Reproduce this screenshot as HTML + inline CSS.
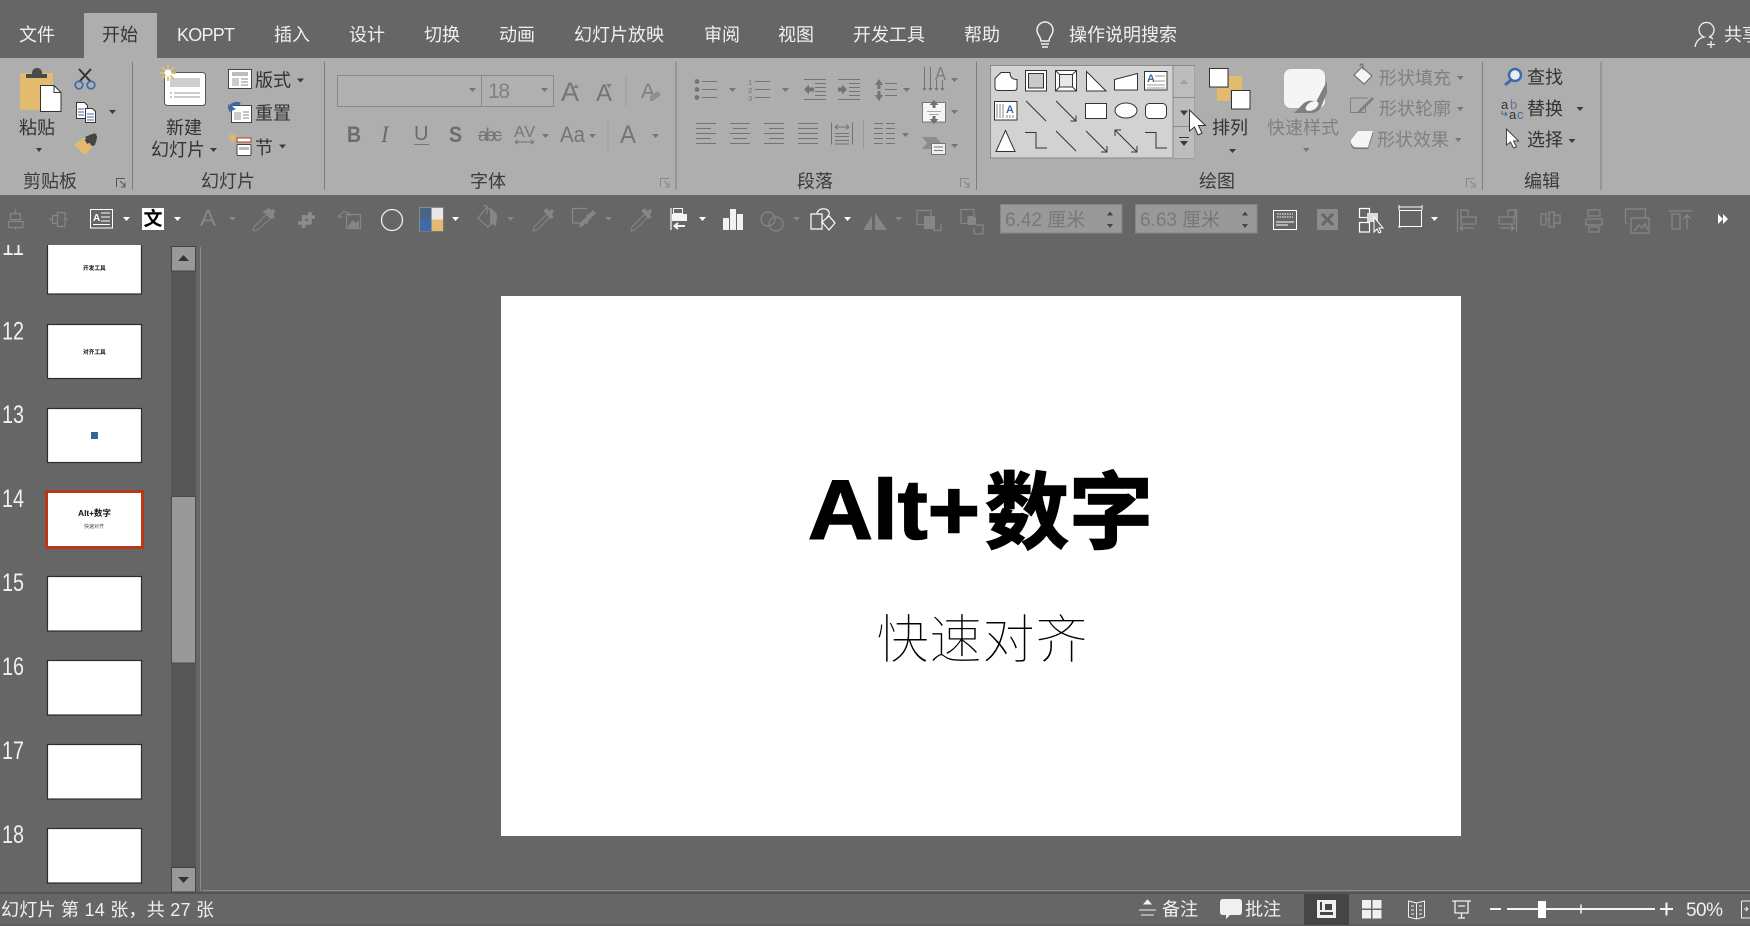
<!DOCTYPE html>
<html lang="zh-CN">
<head>
<meta charset="utf-8">
<title>PowerPoint</title>
<style>
html,body{margin:0;padding:0;background:#666;overflow:hidden}
svg{display:block}
text{font-family:"Liberation Sans","Noto Sans CJK SC",sans-serif}
.tab{font-size:18px;fill:#f0f0f0}
.t{font-size:18px;fill:#333}
.g{font-size:18px;fill:#808080}
.lb{font-size:18px;fill:#3a3a3a;text-anchor:middle}
.n{font-size:25px;fill:#f0f0f0}
.st{font-size:18px;fill:#f0f0f0}
.dim{font-size:19px;fill:#787878}
</style>
</head>
<body>
<svg width="1750" height="926" viewBox="0 0 1750 926" xmlns="http://www.w3.org/2000/svg">
<rect width="1750" height="926" fill="#666"/>

<!-- Ribbon -->
<rect x="0" y="58" width="1750" height="137" fill="#aeaeae"/>
<rect x="84" y="13" width="73" height="45" fill="#aeaeae"/>

<!-- Tabs -->
<text class="tab" x="19" y="41">文件</text>
<text class="t" x="102" y="41">开始</text>
<text class="tab" x="177" y="41" textLength="58">KOPPT</text>
<text class="tab" x="274" y="41">插入</text>
<text class="tab" x="349" y="41">设计</text>
<text class="tab" x="424" y="41">切换</text>
<text class="tab" x="499" y="41">动画</text>
<text class="tab" x="574" y="41">幻灯片放映</text>
<text class="tab" x="704" y="41">审阅</text>
<text class="tab" x="778" y="41">视图</text>
<text class="tab" x="853" y="41">开发工具</text>
<text class="tab" x="964" y="41">帮助</text>
<text class="tab" x="1069" y="41">操作说明搜索</text>
<text class="tab" x="1724" y="41">共享</text>
<path d="M1041 41c0-4-4-6-4-11a8 8 0 0 1 16 0c0 5-4 7-4 11zM1041 44h8M1042 47h6" fill="none" stroke="#f0f0f0" stroke-width="1.5"/>
<path d="M1695 47c1-6 5-9 9-10a7.500 7.500 0 1 1 5 0c1 0 3 1 4 2M1711 41v7M1707 44.500h8" fill="none" stroke="#f0f0f0" stroke-width="1.300"/>

<!-- Group separators -->
<path d="M132.500 62V190M324.500 62V190M676 62V190M976.500 62V190M1482.500 62V190M1601 62V190" stroke="#7e7e7e" stroke-width="1"/>

<!-- Group labels -->
<text class="lb" x="50" y="187.500">剪贴板</text>
<text class="lb" x="228" y="187.500">幻灯片</text>
<text class="lb" x="488" y="187.500">字体</text>
<text class="lb" x="815" y="187.500">段落</text>
<text class="lb" x="1217" y="187.500">绘图</text>
<text class="lb" x="1542" y="187.500">编辑</text>
<path d="M116.500 187V178.500H125M120 181l5 5M125 182.500V187H121" fill="none" stroke="#555"/>
<g fill="none" stroke="#888" stroke-width="1">
<path d="M660.500 187V178.500H669M664 181l5 5M669 182.500V187H665"/>
<path d="M960.500 187V178.500H969M964 181l5 5M969 182.500V187H965"/>
<path d="M1466.500 187V178.500H1475M1470 181l5 5M1475 182.500V187H1471"/>
</g>

<!-- Paste -->
<rect x="20" y="73" width="33" height="37" rx="2" fill="#e3bb6e"/>
<path d="M26 78v-4h6q0-6 5-6t5 6h5v4z" fill="#4a4a4a"/>
<path d="M40.500 85.500H54l7 7v19H40.500z" fill="#fff" stroke="#333" stroke-width="1"/>
<path d="M54 85.500v7h7" fill="none" stroke="#333"/>
<text class="t" x="19" y="134">粘贴</text>
<path d="M79 69l12 13M91 69L79 82" stroke="#333" stroke-width="2" fill="none"/>
<circle cx="79" cy="85" r="3.800" fill="none" stroke="#3e6aa5" stroke-width="1.700"/>
<circle cx="91" cy="85" r="3.800" fill="none" stroke="#3e6aa5" stroke-width="1.700"/>
<path d="M76.500 102.500h8l3 3v13h-11z" fill="#fff" stroke="#333"/>
<path d="M85.500 108.500h7l3 3v11h-10z" fill="#fff" stroke="#333"/>
<path d="M78 109h6M78 112h6M78 115h6M87 114h7M87 117h7M87 120h7" stroke="#3e6aa5" stroke-width="1"/>
<!-- brush -->
<path d="M74 145l10-7 8 9-7 8z" fill="#e3bb6e"/>
<path d="M85 137l7-3 5-0 -2 2 2 2-2 7-3 1z" fill="#444"/>
<path d="M96 135l-10 7" stroke="#444" stroke-width="5"/>

<!-- New slide -->
<rect x="164.500" y="72.500" width="41" height="33" rx="3" fill="#fff" stroke="#555"/>
<rect x="170" y="78" width="30" height="9" fill="#cfcfcf"/>
<path d="M170 93h2M174 93h26M170 97h2M174 97h26" stroke="#999"/>
<path d="M168 65v16M160 73h16M162 67l12 12M174 67l-12 12" stroke="#e3bb6e" stroke-width="1.800"/>
<circle cx="168" cy="73" r="3.500" fill="#fff"/>
<text class="t" x="166" y="134">新建</text>
<text class="t" x="151" y="156">幻灯片</text>
<rect x="228.500" y="69.500" width="23" height="19" fill="#fff" stroke="#444"/>
<rect x="232" y="72" width="16" height="4" fill="#bbb"/>
<rect x="232" y="78" width="7" height="8" fill="#ccc"/>
<path d="M241 79h7M241 82h7M241 85h7" stroke="#888"/>
<text class="t" x="255" y="86.500">版式</text>
<rect x="231.500" y="105.500" width="20" height="17" fill="#fff" stroke="#444"/>
<rect x="234" y="112" width="7" height="8" fill="#ccc"/>
<path d="M243 112h6M243 115h6M243 118h6" stroke="#888"/>
<path d="M229 109c2-5 7-7 11-5" fill="none" stroke="#3e6aa5" stroke-width="3"/>
<path d="M228 104l1 8 7-3z" fill="#3e6aa5"/>
<text class="t" x="255" y="119.500">重置</text>
<path d="M233 133v10M228 138h10M229.500 134.500l7 7M236.500 134.500l-7 7" stroke="#e3bb6e" stroke-width="1.200"/>
<rect x="237" y="138" width="14" height="4" fill="#fff" stroke="#b9381a"/>
<rect x="237" y="144.500" width="14" height="11" rx="1" fill="#fff" stroke="#444"/>
<rect x="239" y="147" width="10" height="3" fill="#bbb"/>
<text class="t" x="255" y="154">节</text>

<path d="M36 148h6l-3 4zM109 110h7l-3.500 4zM210 148h7l-3.500 4zM297 78.500h7l-3.500 4zM279 144.500h7l-3.500 4zM1229 149h7l-3.500 4zM1576.500 107h7l-3.500 4zM1568.500 139h7l-3.500 4z" fill="#3a3a3a"/>

<!-- Font group -->
<rect x="337.500" y="75.500" width="144" height="31" fill="#b0b0b0" stroke="#8a8a8a"/>
<rect x="481.500" y="75.500" width="72" height="31" fill="#b0b0b0" stroke="#8a8a8a"/>
<text x="488" y="98" style="font-size:21px;fill:#808080" textLength="22">18</text>
<text x="561" y="101" style="font-size:27px;fill:#757575">A</text>
<text x="596" y="101" style="font-size:24px;fill:#757575">A</text>
<text x="641" y="98" style="font-size:21px;fill:#808080">A</text>
<text x="347" y="142" style="font-size:22px;fill:#6c6c6c;font-weight:700" textLength="14" lengthAdjust="spacingAndGlyphs">B</text>
<text x="381" y="142" style="font-size:23px;fill:#6c6c6c;font-style:italic;font-family:'Liberation Serif',serif">I</text>
<text x="414" y="140" style="font-size:20px;fill:#6c6c6c">U</text>
<text x="449" y="142" style="font-size:22px;fill:#6c6c6c;font-weight:700" textLength="13" lengthAdjust="spacingAndGlyphs">S</text>
<text x="478" y="141" style="font-size:18px;fill:#757575" textLength="24">abc</text>
<text x="514" y="137" style="font-size:16px;fill:#757575" textLength="21">AV</text>
<text x="560" y="142" style="font-size:22px;fill:#757575" textLength="25" lengthAdjust="spacingAndGlyphs">Aa</text>
<text x="620" y="143" style="font-size:25px;fill:#757575" textLength="16" lengthAdjust="spacingAndGlyphs">A</text>
<path d="M414 144.500h15M478 135.500h24M515 142h19M515 142l3-2M515 142l3 2M534 142l-3-2M534 142l-3 2" stroke="#757575" fill="none"/>
<path d="M626 76V106M608 121V150" stroke="#9a9a9a"/>
<path d="M650 96l8-5 3 4-8 6h-3z" fill="#909090"/>
<path d="M576 84l3 4h-6zM609 88l3-4h-6z" fill="#808080"/>

<path d="M469 88h7l-3.500 4zM541 88h7l-3.500 4zM542 134h7l-3.500 4zM589 134h7l-3.500 4zM652 134h7l-3.500 4zM729 88h7l-3.500 4zM782 88h7l-3.500 4zM903 88h7l-3.500 4zM951 78h7l-3.500 4zM902 133h7l-3.500 4zM951 110h7l-3.500 4zM951 144h7l-3.500 4zM1303 148h6.500l-3.200 4zM1457 76h6.500l-3.200 4zM1457 107h6.500l-3.200 4zM1455 138h6.500l-3.200 4z" fill="#757575"/>

<!-- Paragraph -->
<g stroke="#737373" stroke-width="1" fill="none">
<path d="M702 81.500h15M702 89.500h15M702 97.500h15"/>
<path d="M755 81.500h15M755 89.500h15M755 97.500h15"/>
<path d="M804 79.500h22M815 83.500h11M815 87.500h11M815 91.500h11M815 95.500h11M804 99.500h22"/>
<path d="M838 79.500h22M849 83.500h11M849 87.500h11M849 91.500h11M849 95.500h11M838 99.500h22"/>
<path d="M885 83.500h12M885 89.500h12M885 95.500h12"/>
<path d="M924.500 67v23M930.500 67v23M936.500 80v10M942.500 80v10"/>
<path d="M696 123.500h20M696 128.500h15M696 133.500h20M696 138.500h15M696 143.500h20"/>
<path d="M730 123.500h20M733 128.500h14M730 133.500h20M733 138.500h14M730 143.500h20"/>
<path d="M764 123.500h20M769 128.500h15M764 133.500h20M769 138.500h15M764 143.500h20"/>
<path d="M798 123.500h20M798 128.500h20M798 133.500h20M798 138.500h20M798 143.500h20"/>
<path d="M831.500 122.500v22M852.500 122.500v22M835 133.500h14M835 136.500h14M835 140.500h14M835 144h14M835 127h14M835 127l3-2.500M835 127l3 2.500M849 127l-3-2.500M849 127l-3 2.500"/>
<path d="M874 123.500h9M886 123.500h9M874 128.500h9M886 128.500h9M874 133.500h9M886 133.500h9M874 138.500h9M886 138.500h9M874 143.500h9M886 143.500h9"/>
<path d="M863.500 120V148.500" stroke="#9a9a9a"/>
</g>
<g fill="#737373">
<circle cx="697" cy="81.500" r="2.400"/><circle cx="697" cy="89.500" r="2.400"/><circle cx="697" cy="97.500" r="2.400"/>
<text x="748" y="85" style="font-size:7.500px;fill:#737373">1</text><text x="748" y="93" style="font-size:7.500px;fill:#737373">2</text><text x="748" y="101" style="font-size:7.500px;fill:#737373">3</text>
<path d="M804 89.500l5-5v3h5v4h-5v3zM847 89.500l-5-5v3h-4v4h4v3z"/>
<path d="M879 79l-4 6h2.500v4h3v-4h2.500zM879 101l-4-6h2.500v-4h3v4h2.500z"/>
<path d="M922.500 88l2 3 2-3zM928.500 88l2 3 2-3zM934.500 88l2 3 2-3zM940.500 88l2 3 2-3z"/>
<text x="935" y="80" style="font-size:18px;fill:#808080" textLength="11" lengthAdjust="spacingAndGlyphs">A</text>
</g>
<rect x="922.500" y="102.500" width="23" height="19.500" fill="#f5f5f5" stroke="#777"/>
<path d="M934 100l-4.500 5h3v3h3v-3h3zM934 124l-4.500-5h3v-3h3v3h3z" fill="#707070"/>
<path d="M927 111.500h14M929 114.500h10" stroke="#aaa"/>
<path d="M922 137h14l5 6-4 6H922l5-6z" fill="#8c8c8c"/>
<rect x="931.500" y="143.500" width="14" height="11" fill="#eee" stroke="#757575"/>
<path d="M934 147h9M934 150.500h9" stroke="#777"/>

<!-- Shape gallery -->
<rect x="990.500" y="65.500" width="204" height="92.500" fill="#d2d2d2" stroke="#8a8a8a"/>
<rect x="1173" y="66" width="21.500" height="92" fill="#bdbdbd"/>
<path d="M1173 65.500V158M1173 97.500h22M1173 126.500h22" stroke="#8a8a8a" fill="none"/>
<path d="M1180 84l4-5 4 5z" fill="#a0a0a0"/>
<path d="M1180 110.500h8l-4 5zM1180 141h8l-4 5z" fill="#3a3a3a"/>
<path d="M1179 137.500h10" stroke="#3a3a3a"/>
<g fill="#fff" stroke="#333" stroke-width="1">
<path d="M1001 72.500h9c0 5 3 7 7 7v8c0 2-1 3-3 3h-16c-2 0-3-1-3-3v-9z"/>
<rect x="1025.500" y="70.500" width="21" height="20.500"/>
<rect x="1028.500" y="73.500" width="15" height="14.500" fill="#c9c9c9"/>
<rect x="1055.500" y="70.500" width="21" height="20.500"/>
<rect x="1059.500" y="74.500" width="13" height="12.500" fill="#e8e8e8"/>
<path d="M1055.500 70.500l4 4M1076.500 70.500l-4 4M1055.500 91l4-4M1076.500 91l-4-4" fill="none"/>
<path d="M1086.500 71.500L1106 91H1086.500z"/>
<path d="M1114.500 79.500L1137.500 73.500V90H1114.500z"/>
<rect x="1144.500" y="71.500" width="22.500" height="18.500"/>
<rect x="994.500" y="101.500" width="22.500" height="18.500"/>
<rect x="1085.500" y="103.500" width="21" height="15"/>
<ellipse cx="1126" cy="110.500" rx="11" ry="7.500"/>
<rect x="1145.500" y="103.500" width="21" height="15" rx="4"/>
<path d="M1005.500 130.500L1015 151.500H996z"/>
</g>
<g fill="none" stroke="#333" stroke-width="1">
<path d="M1026 101l20 20M1056 101l20 20M1076 115.500v5.500h-5.500"/>
<path d="M1025 132.500h11v15.500h11M1056 131l20 20M1086 131l21 21M1107 146v6h-6M1115 130l22 22M1115 136v-6h6M1137 146v6h-6M1145 132.500h11v15.500h11"/>
</g>
<path d="M1155 81h10M1155 76h10M1147 85h18M1147 88h18" stroke="#999"/>
<text x="1147" y="82" style="font-size:11px;font-weight:700;fill:#3e6aa5">A</text>
<path d="M997 104v14M1000 104v14M1003 104v14M1007 115v3M1010 115v3M1013 115v3" stroke="#888"/>
<text x="1006" y="113" style="font-size:11px;font-weight:700;fill:#3e6aa5">A</text>

<!-- Arrange -->
<rect x="1209.500" y="68.500" width="18.500" height="18.500" fill="#fff" stroke="#333"/>
<rect x="1229" y="76" width="13" height="14" fill="#e3bb6e"/>
<rect x="1217" y="88" width="13" height="13" fill="#e3bb6e"/>
<rect x="1231.500" y="90.500" width="18.500" height="18.500" fill="#fff" stroke="#333"/>
<text class="t" x="1212" y="134">排列</text>

<!-- Quick styles -->
<rect x="1284" y="69" width="41" height="39" rx="7" fill="#f5f5f5"/>
<path d="M1294 113l10-10c4-3 9-3 12-1l11-21v12l-6 14c-1 3-5 6-9 6z" fill="#808080"/>
<ellipse cx="1312" cy="106" rx="7" ry="4" transform="rotate(-30 1312 106)" fill="#f5f5f5"/>
<text class="g" x="1267" y="134">快速样式</text>

<!-- Shape fill/outline/effects -->
<path d="M1362 67l10 9-8 8-10-9z" fill="#f5f5f5" stroke="#666"/>
<path d="M1360 66c0-2 2-3 3-1v5" fill="none" stroke="#666"/>
<text class="g" x="1379" y="84.500">形状填充</text>
<path d="M1368 98h-17.500v14.500h15V104" fill="none" stroke="#808080"/>
<path d="M1372 97l-13 13-2 3 4-1 13-13z" fill="#808080"/>
<text class="g" x="1379" y="115">形状轮廓</text>
<path d="M1351 140l7-9h15l-4 16h-13c-3 0-6-4-5-7z" fill="#f5f5f5"/>
<path d="M1369 147l4-13v-3l-5 16zM1351 143c1 3 3 5 5 5h12l1 1h-14c-2 0-5-3-4-6z" fill="#777"/>
<text class="g" x="1377" y="146">形状效果</text>

<!-- Editing -->
<circle cx="1515" cy="75" r="6" fill="#e8eef5" stroke="#3e6aa5" stroke-width="2.500"/>
<path d="M1511 80l-6 5" stroke="#3e6aa5" stroke-width="3"/>
<text class="t" x="1527" y="83.500">查找</text>
<text x="1501" y="109" style="font-size:13px;fill:#333">a</text>
<text x="1510" y="109" style="font-size:13px;fill:#7a6a92">b</text>
<text x="1509" y="119" style="font-size:13px;fill:#333">a</text>
<text x="1517" y="119" style="font-size:13px;fill:#3e6aa5">c</text>
<path d="M1502 111v3h5M1505 112l2 2-2 2" fill="none" stroke="#3e6aa5"/>
<text class="t" x="1527" y="115">替换</text>
<path d="M1506.500 129v16l4-3 3 6 3-1-3-6h5z" fill="#fff" stroke="#444"/>
<text class="t" x="1527" y="146">选择</text>

<path d="M1189.500 110v21l5-4 3.500 8 4-1.800-3.500-7.700h7z" fill="#fff" stroke="#333" stroke-width="1"/>

<!-- Toolbar left -->
<g fill="none" stroke="#868686" stroke-width="1.200">
<path d="M15.500 209.500v4M15.500 219v2M15.500 227v3M10.500 213.500h10v6h-10zM8.500 221.500h14.500v6h-14.500z"/>
<path d="M49 219h3M65 219h3M52.500 215.500h5v8h-5zM57.500 212.500h7.500v14h-7.500z"/>
<path d="M272 212l2 2-1 2-14 13-4 2-2-1 1-3 14-14z" stroke-width="1"/>
<path d="M304 217h11M303.500 215v13M298 223h13M310 212v12" stroke-width="3.500" stroke="#8c8c8c"/>
<path d="M338 217l5-5M338 217h5M343 212c4-1 6 1 7 4M346.500 214.500h14v14h-14z"/>
<path d="M487 207l10 11-9 9-10-9zM484 207c1-2 3-2 3 0v7"/>
<path d="M534 227l14-14 3 3-14 14-4 1z" stroke-width="1"/>
<path d="M587 208.500h-14.500v14.500h15V214"/>
<path d="M632 227l14-14 3 3-14 14-4 1z" stroke-width="1"/>
<circle cx="768" cy="219" r="7"/><circle cx="776" cy="224" r="7"/>
<path d="M917 210.500h14v7M917 210.500v14h7M934 226v4.500h7v-7"/>
<path d="M961 209.500h13v7h-6v7h-7zM976 225h7v9h-9v-6"/>
</g>
<g fill="#868686">
<text x="200" y="226" style="font-size:24px;fill:#868686">A</text>
<path d="M264 211l5-3 2 2 3-1 1 3-3 2 1 3-2 2-9-8zM534 0"/>
<path d="M264 211l4-3 2 3 3-2 2 2-2 4 2 2-3 2-10-10z"/>
<path d="M543 211l4-3 2 3 3-2 2 2-2 4 2 2-3 2-10-10z"/>
<path d="M641 211l4-3 2 3 3-2 2 2-2 4 2 2-3 2-10-10z"/>
<path d="M348 226l5-6 3 3 3-3v8h-11z"/>
<path d="M875 230V213l12 17z"/>
<path d="M863 230l9-14v14z"/>
<path d="M924 216h11v13h-11z"/>
<path d="M968 217h8v8h-8z"/>
<path d="M580 223l13-13 3 3-13 13-4 1z"/>
<path d="M490 207l7 7-1 12-6-3z"/>
</g>
<!-- white icons -->
<rect x="90.500" y="209.500" width="22" height="18.500" fill="none" stroke="#fff"/>
<text x="93" y="221" style="font-size:10px;fill:#fff;font-weight:700">A</text>
<path d="M101 213h9M101 217h9M101 221h9M93 224.500h17" stroke="#fff"/>
<rect x="142" y="208" width="22" height="22" fill="#fff"/>
<text x="143.500" y="225" style="font-size:19px;font-weight:700;fill:#000">文</text>
<ellipse cx="392" cy="220" rx="10.500" ry="10.500" fill="none" stroke="#f2f2f2" stroke-width="1.300"/>
<rect x="419.500" y="207.500" width="23.500" height="23.500" fill="none" stroke="#8a8a8a"/>
<rect x="420" y="208" width="11.500" height="11.500" fill="#4a6488"/>
<rect x="420" y="219.500" width="11.500" height="11.500" fill="#3e6aa5"/>
<rect x="431.500" y="208" width="11.500" height="11.500" fill="#e8e8e8"/>
<rect x="431.500" y="219.500" width="11.500" height="11.500" fill="#e3bb6e"/>
<path d="M671 208v22" stroke="#f5f5f5" stroke-width="1.200"/>
<rect x="673.500" y="208.500" width="9" height="5" fill="none" stroke="#f5f5f5"/>
<rect x="672" y="214" width="15" height="7" fill="#f5f5f5"/>
<path d="M685 226h-10M678 223l-3.500 3 3.500 3" fill="none" stroke="#f5f5f5" stroke-width="2"/>
<path d="M723 218h6v12h-6zM730 209h6v21h-6zM737 214h6v16h-6z" fill="#f2f2f2"/>
<path d="M811 214h11v15h-11zM822 222l7 8 6-7-6-7zM817 214c0-6 10-7 12-2 1 3-1 4-2 5" fill="none" stroke="#fff" stroke-width="1.200"/>
<path d="M123 217h7l-3.500 4zM174 217h7l-3.500 4zM452 217h7l-3.500 4zM699 217h7l-3.500 4zM844 217h7l-3.500 4zM1431 217h7l-3.500 4z" fill="#fff"/>
<path d="M229 217h7l-3.500 4zM507 217h7l-3.500 4zM605 217h7l-3.500 4zM793 217h7l-3.500 4zM895 217h7l-3.500 4z" fill="#868686"/>

<!-- size inputs -->
<rect x="1000.500" y="204.500" width="121.500" height="28.500" fill="#999" stroke="#868686"/>
<rect x="1135.500" y="204.500" width="121.500" height="28.500" fill="#999" stroke="#868686"/>
<text class="dim" x="1005" y="226">6.42 厘米</text>
<text class="dim" x="1140" y="226">6.63 厘米</text>
<path d="M1107 215.500h6l-3-4zM1107 224h6l-3 4zM1242 215.500h6l-3-4zM1242 224h6l-3 4z" fill="#444"/>

<!-- right toolbar icons -->
<rect x="1273.500" y="210.500" width="23" height="19" fill="none" stroke="#fff"/>
<path d="M1277 214h16" stroke="#fff" stroke-dasharray="1.500 1"/>
<path d="M1277 217h16" stroke="#fff" stroke-dasharray="1.500 1"/>
<path d="M1276 222h18M1276 225h12" stroke="#fff"/>
<rect x="1317" y="209" width="21" height="21" rx="1" fill="#8c8c8c"/>
<path d="M1322 214l11 11M1333 214l-11 11" stroke="#666" stroke-width="3"/>
<path d="M1359.500 208.500h10v9h-10zM1359.500 222.500h10v9.500h-10z" fill="none" stroke="#fff" stroke-width="1.200"/>
<rect x="1367" y="213" width="11" height="9" fill="#ddd"/>
<path d="M1374 217v15l3-3 2 4 2-1-2-4h4z" fill="#666" stroke="#fff"/>
<rect x="1399.500" y="210.500" width="22" height="16" fill="none" stroke="#fff"/>
<path d="M1399 207h23M1399 205v5M1422 205v5M1399.500 210v17M1398 227h3" stroke="#fff" fill="none"/>
<g fill="none" stroke="#868686" stroke-width="1.300">
<path d="M1457.500 209v23M1461 210h7v7h-7zM1461 217h15v7h-15zM1474 228h-14M1463 225l-3 3 3 3"/>
<path d="M1516.500 209v23M1508 210h7v7h-7zM1499 217h15v7h-15zM1500 228h14M1511 225l3 3-3 3"/>
<path d="M1541 214h5v11h-5zM1549 212h5v15h-5zM1554 215h6v8h-6zM1547 219h2"/>
<path d="M1594 209v1M1588 210h12v6h-12zM1586 219h16v6h-16zM1589 227h10v5h-10z"/>
<path d="M1625.500 209h20v9M1625.500 209v14h2M1631 218h18v15h-18z"/>
<path d="M1634 231l5-6 3 3 3-4 3 6"/>
<path d="M1669 211h23M1672 214h8v15h-8zM1687 229v-13M1683 219l4-4 4 4"/>
</g>
<path d="M1718 214v10l5-5zM1723 214v10l5-5z" fill="#fff"/>

<!-- Thumbnails -->
<clipPath id="thumbclip"><rect x="0" y="245" width="170" height="646"/></clipPath>
<g clip-path="url(#thumbclip)">
<g fill="#fff" stroke="#2c2c2c" stroke-width="1.200">
<rect x="47.500" y="240" width="94" height="54"/>
<rect x="47.500" y="324.500" width="94" height="54"/>
<rect x="47.500" y="408.500" width="94" height="54"/>
<rect x="47.500" y="576.500" width="94" height="54.500"/>
<rect x="47.500" y="660.500" width="94" height="54.500"/>
<rect x="47.500" y="744.500" width="94" height="54.500"/>
<rect x="47.500" y="828.500" width="94" height="54.500"/>
</g>
<rect x="46.500" y="491.500" width="96" height="56" fill="#fff" stroke="#b9381a" stroke-width="3"/>
<g>
<text class="n" x="2" y="255" textLength="22" lengthAdjust="spacingAndGlyphs">11</text>
<text class="n" x="2" y="339.500" textLength="22" lengthAdjust="spacingAndGlyphs">12</text>
<text class="n" x="2" y="423" textLength="22" lengthAdjust="spacingAndGlyphs">13</text>
<text class="n" x="2" y="507" textLength="22" lengthAdjust="spacingAndGlyphs">14</text>
<text class="n" x="2" y="591" textLength="22" lengthAdjust="spacingAndGlyphs">15</text>
<text class="n" x="2" y="675" textLength="22" lengthAdjust="spacingAndGlyphs">16</text>
<text class="n" x="2" y="759" textLength="22" lengthAdjust="spacingAndGlyphs">17</text>
<text class="n" x="2" y="843" textLength="22" lengthAdjust="spacingAndGlyphs">18</text>
</g>
<text x="83" y="270" style="font-size:5.700px;font-weight:700;fill:#111">开发工具</text>
<text x="83" y="354" style="font-size:5.700px;font-weight:700;fill:#111">对齐工具</text>
<rect x="91" y="432" width="7" height="7" fill="#3b6398"/>
<text x="78" y="516" style="font-size:8.500px;font-weight:700;fill:#111" textLength="33">Alt+数字</text>
<text x="84" y="528" style="font-size:5px;fill:#444">快速对齐</text>
</g>

<!-- Scrollbar -->
<rect x="171" y="246" width="25" height="646" fill="#565656"/>
<rect x="171.500" y="246.500" width="24" height="24.500" fill="#999" stroke="#444"/>
<rect x="171.500" y="496.500" width="24" height="166.500" fill="#999" stroke="#4c4c4c"/>
<rect x="171.500" y="867.500" width="24" height="24.500" fill="#999" stroke="#444"/>
<path d="M178 261h11l-5.500-6zM178 877h11l-5.500 6z" fill="#333"/>
<path d="M200.500 247V891" stroke="#8c8c8c"/>
<path d="M203 890.500H1750" stroke="#8c8c8c"/>
<path d="M0 893H1750" stroke="#4f4f4f" stroke-width="1.500"/>
<path d="M0 925H1750" stroke="#555" stroke-width="1"/>

<!-- Slide -->
<rect x="501" y="296" width="960" height="540" fill="#fff"/>
<text x="808" y="539" style="font-size:84px;font-weight:700;fill:#000;stroke:#000;stroke-width:1.500px" textLength="172" lengthAdjust="spacingAndGlyphs">Alt+</text>
<text x="985" y="542" style="font-size:84px;font-weight:700;fill:#000;stroke:#000;stroke-width:1.500px;font-family:'Noto Sans CJK SC',sans-serif">数字</text>
<text x="876" y="658" style="font-size:53px;font-weight:300;fill:#000;stroke:#fff;stroke-width:1px;paint-order:fill stroke;font-family:'Noto Sans CJK SC',sans-serif">快速对齐</text>

<!-- Status bar -->
<text class="st" x="1" y="916" textLength="213">幻灯片 第 14 张，共 27 张</text>
<rect x="1304" y="894" width="45" height="31" fill="#454545"/>
<path d="M1139 910h17M1141 915h13M1144 904h7l-3.500-4z" stroke="#f0f0f0" fill="#f0f0f0" stroke-width="1"/>
<text class="st" x="1162" y="915.500">备注</text>
<path d="M1223 899h16q3 0 3 3v10q0 3-3 3h-9l-4 4v-4h-3q-3 0-3-3v-10q0-3 3-3z" fill="#f0f0f0"/>
<text class="st" x="1245" y="915.500">批注</text>
<rect x="1317" y="900" width="19" height="18" fill="#f0f0f0"/>
<rect x="1325" y="904" width="7" height="6" fill="#454545"/>
<rect x="1320" y="912" width="13" height="3" fill="#454545"/>
<rect x="1320" y="902" width="2" height="8" fill="#454545"/>
<path d="M1362 900h9v8.500h-9zM1372.500 900h9v8.500h-9zM1362 910h9v8.500h-9zM1372.500 910h9v8.500h-9z" fill="#f0f0f0"/>
<path d="M1408.500 901l8 2 8-2v16l-8 2-8-2zM1416.500 903v16M1411 906h3M1411 910h3M1411 914h3M1419 906h3M1419 910h3M1419 914h3" fill="none" stroke="#f0f0f0"/>
<path d="M1452 901h19M1455 901v12h13v-12M1458 906h7M1461.500 913v5M1458 918h7" fill="none" stroke="#f0f0f0" stroke-width="1.300"/>
<path d="M1490 909h11M1507 909h148M1660 909h13M1666.500 902.500v13" stroke="#f5f5f5" stroke-width="2"/>
<rect x="1538" y="901" width="8" height="17" fill="#fff"/>
<path d="M1581 904.500v9" stroke="#f5f5f5" stroke-width="1.500"/>
<text class="st" x="1686" y="916" style="font-size:19px" textLength="37">50%</text>
<path d="M1741.500 901v17h9M1741.500 901h9M1744 909h4M1746 907l2 2-2 2" fill="none" stroke="#f0f0f0"/>
</svg>
</body>
</html>
